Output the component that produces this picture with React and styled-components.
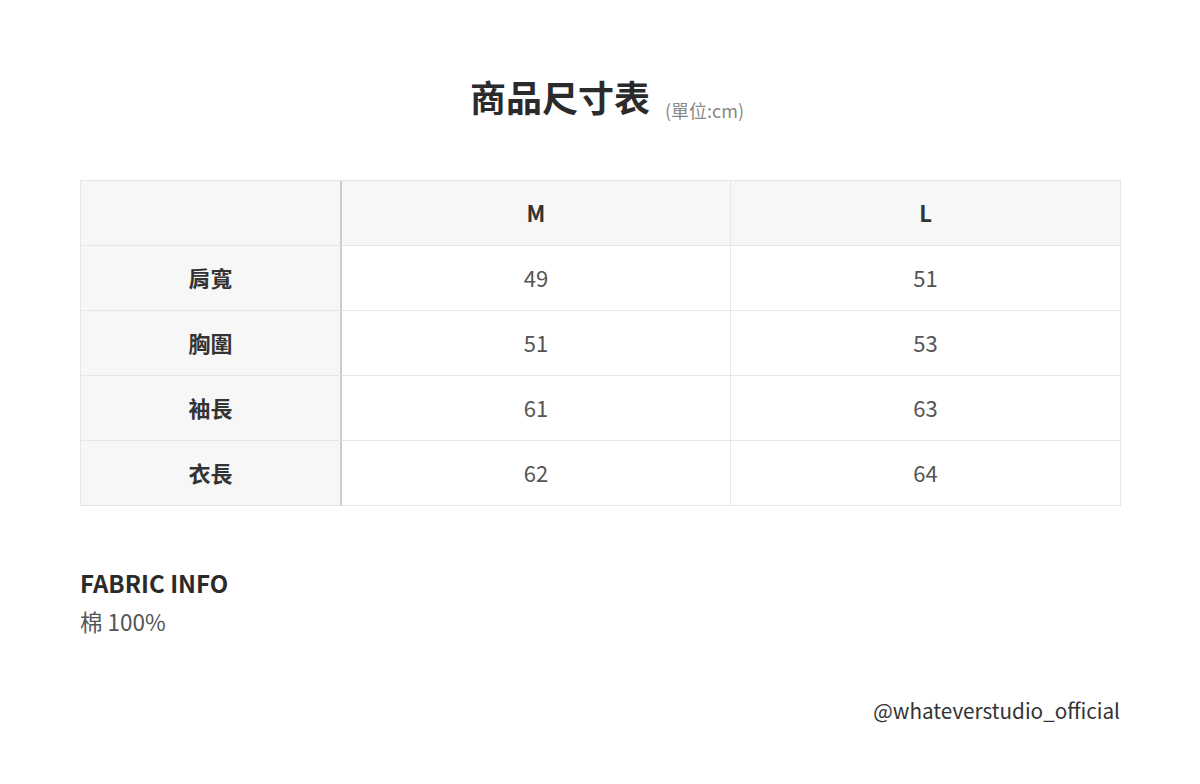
import React from "react";
import styled, { createGlobalStyle } from "styled-components";

const Global = createGlobalStyle`
  html, body { margin: 0; padding: 0; background: #fff; }
  body { font-family: "Noto Sans CJK TC", "Noto Sans", sans-serif; }
`;

const Page = styled.div`
  width: 1200px;
  height: 784px;
  box-sizing: border-box;
  padding: 69px 80px 0;
  display: flex;
  flex-direction: column;
`;

const TitleRow = styled.div`
  display: flex;
  justify-content: center;
  align-items: flex-end;
  gap: 15px;
  height: 54px;
  padding-left: 14px;
`;

const Title = styled.h1`
  margin: 0;
  font-size: 36px;
  font-weight: 700;
  color: #2b2b2b;
  line-height: 54px;
`;

const Unit = styled.span`
  font-size: 18px;
  line-height: 18px;
  margin-bottom: 4px;
  color: #888;
`;

const Table = styled.div`
  margin-top: 57px;
  display: grid;
  grid-template-columns: 261px 389px 1fr;
  border-top: 1px solid #e6e6e6;
  border-left: 1px solid #e6e6e6;
  width: 1041px;
  box-sizing: border-box;
`;

const Cell = styled.div`
  height: 65px;
  box-sizing: border-box;
  padding-bottom: 2px;
  display: flex;
  align-items: center;
  justify-content: center;
  border-right: ${(p) => (p.$label ? "2px solid #cccccc" : "1px solid #e6e6e6")};
  border-bottom: 1px solid #e6e6e6;
  background: ${(p) => (p.$shade ? "#f7f7f7" : "#fff")};
  font-size: 22px;
  font-weight: ${(p) => (p.$bold ? 700 : 400)};
  color: ${(p) => (p.$bold ? "#333" : "#555")};
`;

const Fabric = styled.section`
  margin-top: 60px;
  display: flex;
  flex-direction: column;
`;

const FabricTitle = styled.h2`
  margin: 0;
  font-size: 24px;
  font-weight: 700;
  color: #2b2b2b;
  line-height: 34px;
`;

const FabricText = styled.p`
  margin: 5px 0 0;
  font-size: 22.5px;
  color: #555;
  line-height: 32px;
`;

const Handle = styled.div`
  margin-top: 58px;
  text-align: right;
  font-size: 20.7px;
  color: #333;
  line-height: 30px;
`;

const rows = [
  ["肩寬", "49", "51"],
  ["胸圍", "51", "53"],
  ["袖長", "61", "63"],
  ["衣長", "62", "64"],
];

export default function App() {
  return (
    <Page>
      <Global />
      <TitleRow>
        <Title>商品尺寸表</Title>
        <Unit>(單位:cm)</Unit>
      </TitleRow>
      <Table>
        <Cell $label $shade />
        <Cell $shade $bold>M</Cell>
        <Cell $shade $bold>L</Cell>
        {rows.map(([label, m, l]) => (
          <React.Fragment key={label}>
            <Cell $label $shade $bold>{label}</Cell>
            <Cell>{m}</Cell>
            <Cell>{l}</Cell>
          </React.Fragment>
        ))}
      </Table>
      <Fabric>
        <FabricTitle>FABRIC INFO</FabricTitle>
        <FabricText>棉 100%</FabricText>
      </Fabric>
      <Handle>@whateverstudio_official</Handle>
    </Page>
  );
}
